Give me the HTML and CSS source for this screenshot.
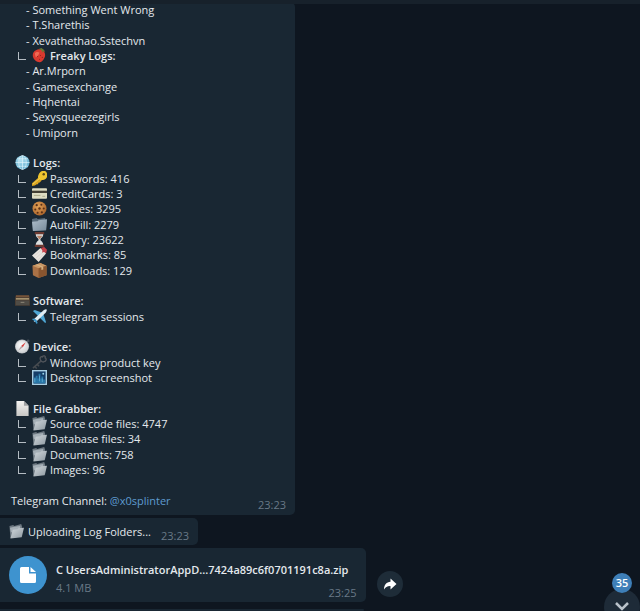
FILE: index.html
```html
<!DOCTYPE html>
<html lang="en">
<head>
    <meta charset="UTF-8">
    <meta name="viewport" content="width=device-width, initial-scale=1.0">
    <title>Telegram Chat</title>
    <link rel="stylesheet" href="styles.css">
</head>
<body>
    <!-- Icon set -->
    <svg class="sprite" aria-hidden="true">
        <defs>
            <linearGradient id="g-folder" x1="0" y1="0" x2="1" y2="1">
                <stop offset="0" stop-color="#aebdca"/>
                <stop offset="1" stop-color="#788b9b"/>
            </linearGradient>
            <linearGradient id="g-open" x1="0" y1="0" x2="1" y2="1">
                <stop offset="0" stop-color="#d3d9dd"/>
                <stop offset="1" stop-color="#8d98a0"/>
            </linearGradient>
            <linearGradient id="g-page" x1="0" y1="0" x2="0" y2="1">
                <stop offset="0" stop-color="#f4f3f1"/>
                <stop offset="1" stop-color="#c8c7c5"/>
            </linearGradient>
            <radialGradient id="g-globe" cx="0.4" cy="0.35" r="0.7">
                <stop offset="0" stop-color="#b4e2f2"/>
                <stop offset="1" stop-color="#5aa9cb"/>
            </radialGradient>
            <radialGradient id="g-cookie" cx="0.4" cy="0.35" r="0.7">
                <stop offset="0" stop-color="#e2a257"/>
                <stop offset="1" stop-color="#a8622a"/>
            </radialGradient>
            <radialGradient id="g-dial" cx="0.45" cy="0.4" r="0.6">
                <stop offset="0" stop-color="#ffffff"/>
                <stop offset="1" stop-color="#cdd0d3"/>
            </radialGradient>
        </defs>
        <symbol id="i-berry" viewBox="0 0 16 16">
            <path d="M1 6C2 2 8 0 11 2c3 2 4 6 2 9-1 3-4 5-6 4C3 14 0 10 1 6z" fill="#d8392f"/>
            <path d="M3 6c1-2 4-2 5-1-1 2-2 4-4 5z" fill="#ee6a55"/>
            <path d="M7 1l3 1 1 3 1-2 2 2-1-3-3-2z" fill="#6b7a33"/>
            <g fill="#8f1f1e"><circle cx="6" cy="9" r=".6"/><circle cx="9" cy="8" r=".6"/><circle cx="8" cy="12" r=".6"/><circle cx="11" cy="10" r=".6"/></g>
        </symbol>
        <symbol id="i-globe" viewBox="0 0 16 16">
            <circle cx="8" cy="8" r="7.5" fill="url(#g-globe)"/>
            <g fill="none" stroke="#e0f5fc" stroke-width=".7"><path d="M.5 8h15M2 4h12M2 12h12M8 .5v15"/><ellipse cx="8" cy="8" rx="4" ry="7.5"/></g>
        </symbol>
        <symbol id="i-key" viewBox="0 0 16 16">
            <path d="M7 7L0 13v3l3-.5L5 14l1.500 0 .3-1.500 1.500-.3L11 9z" fill="#d9a520"/>
            <path d="M7 4c1-3 4-5 7-4 3 2 3 6 1 8-2 2-6 2-7 1-2-1-2-3-1-5z" fill="#edc42f"/>
            <path d="M1 14l7-6" stroke="#f8e06c" stroke-width=".8"/>
            <circle cx="12.500" cy="3.500" r="1.300" fill="#5a4715"/>
        </symbol>
        <symbol id="i-card" viewBox="0 0 16 16">
            <rect x="0" y="2.500" width="16" height="11" rx="1" fill="#dddcc2"/>
            <path d="M0 5h16v2.500H0z" fill="#423f34"/>
            <path d="M2 10h7M11 11h3" stroke="#aaa989" stroke-width="1"/>
        </symbol>
        <symbol id="i-cookie" viewBox="0 0 16 16">
            <circle cx="8" cy="8" r="7.500" fill="url(#g-cookie)"/>
            <g fill="#5b3017"><circle cx="5" cy="4.500" r="1.200"/><circle cx="10" cy="4" r="1.100"/><circle cx="3.500" cy="9" r="1.100"/><circle cx="8" cy="8" r="1.300"/><circle cx="12.500" cy="8" r="1.100"/><circle cx="6" cy="12.500" r="1.100"/><circle cx="10.500" cy="12" r="1.200"/></g>
        </symbol>
        <symbol id="i-folder" viewBox="0 0 16 16">
            <path d="M0 2l5-1 1 1 8-1v2l2 0L15 14 1 15z" fill="#586a79"/>
            <path d="M0 5l6-.5 1-1 9-1L15 14 1 15z" fill="url(#g-folder)"/>
        </symbol>
        <symbol id="i-open" viewBox="0 0 16 16">
            <path d="M.5 2l4-1 1 1L13 0l1 3v10L1.500 15z" fill="#6d7881"/>
            <path d="M1 4l5-1 6-1v4L2 9z" fill="#a5afb6"/>
            <path d="M4 6l5-.5 1-1 6-.5-2.500 10L1.500 15.500z" fill="url(#g-open)"/>
        </symbol>
        <symbol id="i-hourglass" viewBox="0 0 16 16">
            <path d="M4 2h8c0 4-3 4-3 6s3 2 3 6H4c0-4 3-4 3-6S4 6 4 2z" fill="#dadedf"/>
            <path d="M5 4h6L8 8z" fill="#b98268"/>
            <path d="M3 0h10v2.500H3zM3 13.500h10V16H3z" fill="#6d3a31"/>
        </symbol>
        <symbol id="i-bookmark" viewBox="0 0 16 16">
            <path d="M0 9l9-8 6 6-8 9z" fill="#e9e5e0"/>
            <path d="M2 10l8-7M4 12l8-7M6 14l7-7" stroke="#d3cdc8" stroke-width=".6"/>
            <path d="M9 1l4-1 3 3-1 4-2-2-2 1V3z" fill="#c7424a"/>
        </symbol>
        <symbol id="i-box" viewBox="0 0 16 16">
            <path d="M.5 3L9 0l6.500 3v10L7 16l-6-3z" fill="#a97146"/>
            <path d="M.5 3L9 0l6.500 3L7 5.500z" fill="#c99867"/>
            <path d="M7 5.500L15.500 3v10L7 16z" fill="#89552f"/>
            <path d="M4 2l6 2.500v3l2-.6V4L6 1.300z" fill="#d6b07f"/>
        </symbol>
        <symbol id="i-drawer" viewBox="0 0 16 16">
            <path d="M1 2.500h14l1 3v8H0v-8z" fill="#4a3d32"/>
            <path d="M1 2.500h14v2H1z" fill="#75543a"/>
            <path d="M1 5.500h14v1.500H1z" fill="#b5a279"/>
            <path d="M1 8h14v5H1z" fill="#4f4c46"/>
            <path d="M6 10h4" stroke="#8c8779"/>
        </symbol>
        <symbol id="i-plane" viewBox="0 0 16 16">
            <path d="M1 2l2-1 8 3-4 4zM15 14l-1 1-6-6 4-4z" fill="#4fa6d4"/>
            <path d="M15.500.5c.8 1-.5 3-1.500 4L5 13 2 13.500l.5-3L11.500 2C13 .7 14.700-.2 15.500.5z" fill="#dfebf2"/>
            <path d="M0 11l1-1 3 1 1 1 1 3-1 1-2-3z" fill="#3c96c8"/>
        </symbol>
        <symbol id="i-compass" viewBox="0 0 16 16">
            <circle cx="14" cy="2" r="1.500" fill="#444d56"/>
            <circle cx="7.500" cy="8" r="7.500" fill="#b3b7bb"/>
            <circle cx="7.500" cy="8" r="6.800" fill="url(#g-dial)"/>
            <path d="M11.500 3.500L8.300 8.800l-1.600-1.600z" fill="#d63d3b"/>
            <path d="M3.500 12.500L6.700 7.200l1.600 1.600z" fill="#b5a3a4"/>
        </symbol>
        <symbol id="i-oldkey" viewBox="0 0 16 16">
            <path d="M1 14l9-8M3 12l2 2.500M5.500 10l2 2" fill="none" stroke="#474b50" stroke-width="1.600"/>
            <path d="M9 5c-1-2 1-4 2-3 1-2 4-1 3 1 2 1 1 4-1 4-1 1-4 0-4-2z" fill="none" stroke="#50545a" stroke-width="1.400"/>
        </symbol>
        <symbol id="i-desktop" viewBox="0 0 16 16">
            <path d="M0 0h16v16H0z" fill="#a9cfe3"/>
            <path d="M1.500 1.500h13v13h-13z" fill="#163f69"/>
            <path d="M2 14V8h2V6h2v3h1V4h2v5h1V7h2v3h2v4z" fill="#2877a8"/>
            <path d="M3 9v4M8 6v6M11 9v4" stroke="#73c1df" stroke-width=".7"/>
            <circle cx="12" cy="4" r="1" fill="#9ad5ea"/>
        </symbol>
        <symbol id="i-page" viewBox="0 0 16 16">
            <path d="M1.500 0h8L14.500 5v11h-13z" fill="url(#g-page)"/>
            <path d="M9.500 0v5h5z" fill="#9fa1a3"/>
        </symbol>
    </svg>

    <header class="top-bar"></header>

    <main class="chat">
        <article class="bubble log-message">
            <div class="log-lines">
                <p class="line item">- Something Went Wrong</p>
                <p class="line item">- T.Sharethis</p>
                <p class="line item">- Xevathethao.Sstechvn</p>
                <p class="line branch"><svg class="emoji"><use href="#i-berry"/></svg><b>Freaky Logs:</b></p>
                <p class="line item">- Ar.Mrporn</p>
                <p class="line item">- Gamesexchange</p>
                <p class="line item">- Hqhentai</p>
                <p class="line item">- Sexysqueezegirls</p>
                <p class="line item">- Umiporn</p>
                <p class="line"></p>
                <p class="line title"><svg class="emoji"><use href="#i-globe"/></svg><b>Logs:</b></p>
                <p class="line branch"><svg class="emoji"><use href="#i-key"/></svg>Passwords: 416</p>
                <p class="line branch"><svg class="emoji"><use href="#i-card"/></svg>CreditCards: 3</p>
                <p class="line branch"><svg class="emoji"><use href="#i-cookie"/></svg>Cookies: 3295</p>
                <p class="line branch"><svg class="emoji"><use href="#i-folder"/></svg>AutoFill: 2279</p>
                <p class="line branch"><svg class="emoji"><use href="#i-hourglass"/></svg>History: 23622</p>
                <p class="line branch"><svg class="emoji"><use href="#i-bookmark"/></svg>Bookmarks: 85</p>
                <p class="line branch"><svg class="emoji"><use href="#i-box"/></svg>Downloads: 129</p>
                <p class="line"></p>
                <p class="line title"><svg class="emoji"><use href="#i-drawer"/></svg><b>Software:</b></p>
                <p class="line branch"><svg class="emoji"><use href="#i-plane"/></svg>Telegram sessions</p>
                <p class="line"></p>
                <p class="line title"><svg class="emoji"><use href="#i-compass"/></svg><b>Device:</b></p>
                <p class="line branch"><svg class="emoji"><use href="#i-oldkey"/></svg>Windows product key</p>
                <p class="line branch"><svg class="emoji"><use href="#i-desktop"/></svg>Desktop screenshot</p>
                <p class="line"></p>
                <p class="line title"><svg class="emoji"><use href="#i-page"/></svg><b>File Grabber:</b></p>
                <p class="line branch"><svg class="emoji"><use href="#i-open"/></svg>Source code files: 4747</p>
                <p class="line branch"><svg class="emoji"><use href="#i-open"/></svg>Database files: 34</p>
                <p class="line branch"><svg class="emoji"><use href="#i-open"/></svg>Documents: 758</p>
                <p class="line branch"><svg class="emoji"><use href="#i-open"/></svg>Images: 96</p>
                <p class="line"></p>
                <p class="line"><span>Telegram Channel: <a href="#">@x0splinter</a></span></p>
            </div>
            <time class="time">23:23</time>
        </article>

        <article class="bubble status-message">
            <svg class="emoji"><use href="#i-open"/></svg>
            <p>Uploading Log Folders...</p>
            <time class="time">23:23</time>
        </article>

        <div class="file-row">
            <article class="bubble file-message">
                <button class="file-btn" aria-label="Download file">
                    <svg width="16" height="16" viewBox="0 0 16 16"><path d="M1.500 0H9v6.500h7V14.500a1.500 1.500 0 0 1-1.500 1.500h-13A1.500 1.500 0 0 1 0 14.500v-13A1.500 1.500 0 0 1 1.500 0zM10.500 0L16 5h-5.500z" fill="#fff"/></svg>
                </button>
                <div class="file-info">
                    <h2>C UsersAdministratorAppD...7424a89c6f0701191c8a.zip</h2>
                    <p>4.1 MB</p>
                </div>
                <time class="time">23:25</time>
            </article>
            <button class="share-btn" aria-label="Forward">
                <svg width="14" height="14" viewBox="0 0 14 14"><path d="M7.500 1.500L13.500 7l-6 5.500V9C4.500 8.800 2.500 10 1 12.500 1 8 3.500 5 7.500 4.800z" fill="#fff"/></svg>
            </button>
        </div>
        <div class="bubble next-message"></div>
    </main>

    <button class="scroll-btn" aria-label="Scroll to bottom">
        <span class="unread">35</span>
        <svg width="16" height="10" viewBox="0 0 16 10"><path d="M2 1l6 6 6-6" fill="none" stroke="#b9c2ca" stroke-width="2.500"/></svg>
    </button>
</body>
</html>
```
FILE: styles.css
```css
* {
    margin: 0;
    padding: 0;
    box-sizing: border-box;
}

body {
    min-height: 100vh;
    display: flex;
    flex-direction: column;
    position: relative;
    overflow: hidden;
    background: #0e1620;
    color: #e4e9ed;
    font-family: "Open Sans", sans-serif;
    font-size: 11px;
    line-height: 15px;
}

button {
    border: none;
    cursor: pointer;
    font-family: inherit;
}

a {
    color: #5e9bd0;
    text-decoration: none;
}

.sprite {
    position: absolute;
    width: 0;
    height: 0;
}

.top-bar {
    position: absolute;
    top: 0;
    left: 0;
    right: 0;
    height: 4px;
    background: #17212b;
}

.chat {
    flex: 1;
    display: flex;
    flex-direction: column;
    align-items: flex-start;
    gap: 3px;
    padding-top: 2px;
}

.bubble {
    background: #192733;
    border-radius: 0 5px 5px 0;
}

.emoji {
    flex: none;
    width: 15px;
    height: 15px;
}

.time {
    color: #697987;
}

/* Log message */
.log-message {
    flex: 1;
    display: flex;
    align-items: flex-end;
    justify-content: space-between;
    width: 295px;
    padding: 0 9px 3px 11px;
}

.log-lines {
    align-self: stretch;
    display: grid;
    grid-auto-rows: 1fr;
    padding-bottom: 4px;
}

.line {
    display: flex;
    align-items: center;
    min-height: 15px;
}

.item {
    padding-left: 15px;
}

.title {
    gap: 3px;
    padding-left: 4px;
}

.branch {
    gap: 3px;
    padding-left: 7px;
}

.branch::before {
    content: "";
    width: 7px;
    height: 7px;
    margin: 1px 3px 0 0;
    border-left: 1px solid #b4bcc3;
    border-bottom: 1px solid #b4bcc3;
}

b {
    font-weight: 600;
}

/* Upload status */
.status-message {
    display: flex;
    align-items: center;
    gap: 4px;
    height: 27px;
    padding: 0 9px;
}

.status-message .time {
    align-self: flex-end;
    margin: 0 0 2px 6px;
}

/* File message */
.file-row {
    display: flex;
    align-items: flex-end;
    gap: 11px;
    margin-bottom: 4px;
}

.file-message {
    display: flex;
    align-items: center;
    height: 54px;
    padding: 0 9px;
}

.file-btn {
    display: flex;
    align-items: center;
    justify-content: center;
    width: 38px;
    height: 38px;
    margin-right: 9px;
    border-radius: 50%;
    background: #3e93cf;
}

.file-info {
    padding-top: 6px;
}

.file-info h2 {
    font-size: 11px;
    font-weight: 600;
    margin-bottom: 3px;
}

.file-info p {
    color: #697987;
}

.file-message .time {
    align-self: flex-end;
    margin: 0 0 2px -20px;
}

.share-btn {
    display: flex;
    align-items: center;
    justify-content: center;
    width: 26px;
    height: 26px;
    margin-bottom: 5px;
    border-radius: 50%;
    background: #1e2c38;
}

.next-message {
    width: 364px;
    height: 2px;
}

/* Scroll down */
.scroll-btn {
    position: absolute;
    right: 0;
    bottom: -14px;
    display: flex;
    align-items: center;
    justify-content: center;
    width: 36px;
    height: 36px;
    border-radius: 50%;
    background: #1e2b38;
}

.unread {
    position: absolute;
    top: -16px;
    left: 8px;
    width: 20px;
    height: 20px;
    border-radius: 50%;
    background: #3e7fb8;
    color: #fff;
    font-size: 11px;
    font-weight: 600;
    line-height: 20px;
}
```
